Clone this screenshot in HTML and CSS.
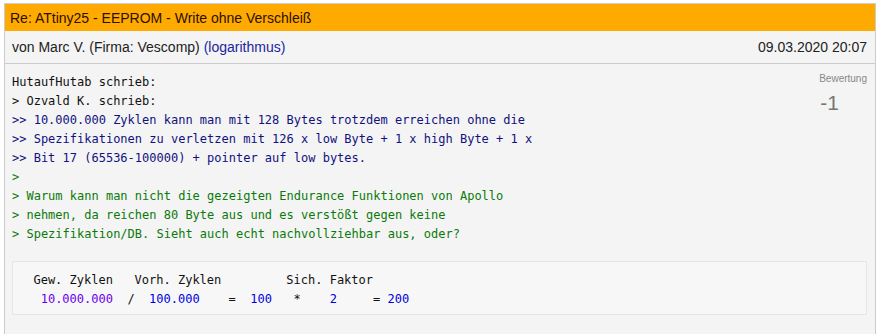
FILE: index.html
```html
<!DOCTYPE html>
<html lang="de">
<head>
    <meta charset="UTF-8">
    <title>Re: ATtiny25 - EEPROM - Write ohne Verschleiß</title>
    <link rel="stylesheet" href="styles.css">
</head>
<body>
    <div class="post">
        <div class="post-subject">Re: ATtiny25 - EEPROM - Write ohne Verschleiß</div>
        <div class="post-info">
            <span class="author">von Marc V. (Firma: Vescomp) <a href="#" class="user">(logarithmus)</a></span>
            <span class="date">09.03.2020 20:07</span>
        </div>
        <div class="post-body">
            <div class="post-main">
                <div class="text">HutaufHutab schrieb:
<span class="q1">&gt; Ozvald K. schrieb:</span>
<span class="q2">&gt;&gt; 10.000.000 Zyklen kann man mit 128 Bytes trotzdem erreichen ohne die
&gt;&gt; Spezifikationen zu verletzen mit 126 x low Byte + 1 x high Byte + 1 x
&gt;&gt; Bit 17 (65536-100000) + pointer auf low bytes.</span>
<span class="q3">&gt;
&gt; Warum kann man nicht die gezeigten Endurance Funktionen von Apollo
&gt; nehmen, da reichen 80 Byte aus und es verstößt gegen keine
&gt; Spezifikation/DB. Sieht auch echt nachvollziehbar aus, oder?</span></div>
                <pre class="code">  Gew. Zyklen   Vorh. Zyklen         Sich. Faktor
   <span class="num-f">10.000.000</span>  /  <span class="num">100.000</span>    =  <span class="num">100</span>   *    <span class="num">2</span>     = <span class="num">200</span></pre>
            </div>
            <div class="rating">
                <div class="rating-label">Bewertung</div>
                <div class="rating-value">-1</div>
            </div>
        </div>
    </div>
</body>
</html>
```

FILE: styles.css
```css
body {
    margin: 3px 5px 0 4px;
    font-family: Arial, "Liberation Sans", sans-serif;
    background-color: #fff;
}
.post {
    border: 1px solid #ccc;
    border-bottom: none;
    background-color: #f4f4f4;
}
.post-subject {
    background-color: #ffaa00;
    color: #2a1000;
    font-size: 14px;
    height: 27px;
    line-height: 28px;
    padding-left: 5px;
}
.post-info {
    display: flex;
    justify-content: space-between;
    font-size: 14px;
    color: #222;
    height: 32px;
    line-height: 32px;
    padding: 0 8px 0 7px;
    border-bottom: 1px solid #ccc;
}
.user {
    color: #2323a0;
    text-decoration: none;
}
.post-body {
    display: flex;
    padding: 9px 8px 20px 7px;
}
.post-main {
    flex: 1;
}
.text {
    font-family: "DejaVu Sans Mono", monospace;
    font-size: 12px;
    line-height: 19px;
    white-space: pre;
    color: #111;
}
.q1 {
    color: #111;
}
.q2 {
    color: #111180;
}
.q3 {
    color: #0b7a0b;
}
.code {
    margin: 17px 0 0 0;
    padding: 9px 6px 5px;
    border: 1px solid #e6e6e6;
    background-color: #f7f7f7;
    font-family: "DejaVu Sans Mono", monospace;
    font-size: 12px;
    line-height: 19px;
    color: #111;
}
.num {
    color: #0000dd;
}
.num-f {
    color: #6a00ee;
}
.rating {
    width: 60px;
    margin-left: -60px;
    text-align: right;
    color: #888;
}
.rating-label {
    font-size: 10px;
    line-height: 12px;
}
.rating-value {
    font-size: 21px;
    line-height: 24px;
    margin-top: 6px;
    padding-right: 28px;
    color: #777;
}
```
